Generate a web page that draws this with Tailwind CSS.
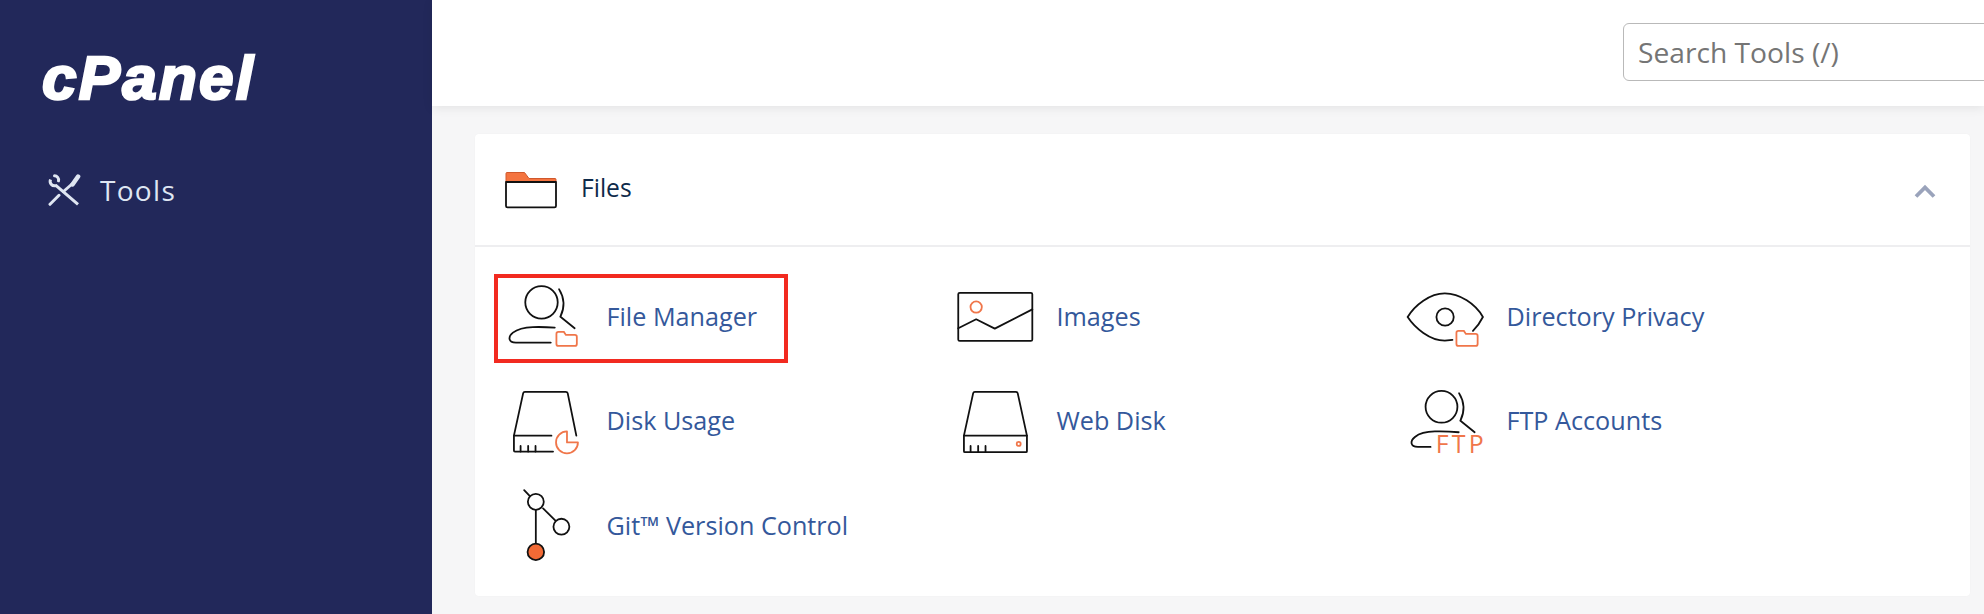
<!doctype html>
<html lang="en">
<head>
<meta charset="utf-8">
<title>cPanel Tools</title>
<script src="https://cdn.jsdelivr.net/npm/@tailwindcss/browser@4"></script>
</head>
<body class="font-['Open_Sans',sans-serif] bg-[#f6f6f7]">
<div class="flex h-[614px] w-[1984px] overflow-hidden">
  <aside class="w-[432px] shrink-0 bg-[#22285a] flex flex-col">
    <div class="pl-[42px] pt-[42px] h-[140px] font-['Liberation_Sans',sans-serif] font-bold italic text-[62px] leading-[72px] tracking-[2.2px] text-white [-webkit-text-stroke:2.5px_white]">cPanel</div>
    <div class="flex items-center h-[40px] mt-[30px] pl-[47px]">
      <svg class="w-[34px] h-[32px]" viewBox="0 0 34 32" fill="none" stroke="#dfe6f2" stroke-width="3" stroke-linecap="round">
        <path d="M3.500 5.500c-1.300 3.400 1.200 7 5.600 6.200L31 30.300" stroke-linecap="butt"/>
        <path d="M7.500 1.800c2.600 0 4.600 2.400 4 5"/>
        <path d="M3 30.300l9-9"/>
        <path d="M16.500 17.500l8.500-7.500"/>
        <path d="M25.500 10.500l5.600-8" stroke-width="4.500"/>
      </svg>
      <span class="ml-[19px] text-[28px] leading-[40px] tracking-[1.300px] text-[#dfe6f2]">Tools</span>
    </div>
  </aside>
  <main class="flex-1 min-w-0 flex flex-col">
    <header class="h-[106px] shrink-0 bg-white shadow-[0_2px_10px_rgba(0,0,0,0.08)] relative pl-[1191px] pt-[23px]">
      <div class="w-[420px] h-[58px] border border-[#b9b9b9] rounded-[6px] pl-[14px] flex items-center text-[28.200px] text-[#757575] whitespace-nowrap">Search Tools (/)</div>
    </header>
    <section class="ml-[43px] mt-[28px] w-[1495px] bg-white rounded-[4px] shadow-[0_0_2px_rgba(0,0,0,0.03)]">
      <div class="h-[113px] border-b-2 border-[#eeeef0] flex items-center pl-[30px] pr-[34px]">
        <svg class="w-[52px] h-[38px]" viewBox="0 0 52 38" fill="none">
          <path d="M1 11V2.500q0-1 1-1h17.500l4.500 6h26q1 0 1 1v2.500z" fill="#f47440" stroke="#d0582c" stroke-width="1"/>
          <path d="M1 11V35q0 1.300 1.500 1.300h47q1.500 0 1.500-1.300V11z" stroke="#111" stroke-width="1.800" stroke-linejoin="round"/>
        </svg>
        <span class="ml-[24px] -mt-[3px] text-[24.600px] text-[#0e2a4a]">Files</span>
        <svg class="ml-auto w-[22px] h-[14px] mt-[3px]" viewBox="0 0 22 14" fill="none"><path d="M2 12.500l9-9 9 9" stroke="#9aa3bb" stroke-width="3.800"/></svg>
      </div>
      <div class="grid grid-cols-[450px_450px_450px] auto-rows-[89px] gap-y-[15px] pl-[19px] pt-[27px] pb-[25px] text-[25.200px] text-[#34589b] whitespace-nowrap">
        <a class="flex items-center w-[294px] border-4 border-[#f22a20]">
          <svg class="w-[108.500px] h-[81px] shrink-0" viewBox="0 0 109 81" fill="none" stroke="#111" stroke-width="1.800" stroke-linecap="round">
            <circle cx="43.700" cy="24.300" r="16.300"/>
            <path d="M61.300 11c5 8 6 18 1.400 27.700L77 50.300"/>
            <path d="M53 64.700H18c-8 0-8-6-3-10 5-4 10-5.300 20-5.600 8-.2 15 0 22 .6"/>
            <path d="M58.700 56q0-2 2-2h5.500l2 3h9q2 0 2 2v7q0 2-2 2h-16.500q-2 0-2-2z" stroke="#f0764a"/>
          </svg>
          <span class="-mt-[4px]">File Manager</span>
        </a>
        <a class="flex items-center w-[294px] border-4 border-transparent">
          <svg class="w-[108.500px] h-[81px] shrink-0" viewBox="0 0 109 81" fill="none" stroke="#111" stroke-width="1.800" stroke-linecap="round" stroke-linejoin="round">
            <rect x="10.300" y="14.700" width="74.400" height="48.300" rx="1.500"/>
            <path d="M10.300 50.300l18-9 18.700 9.400 37.700-19.400"/>
            <circle cx="28.300" cy="29" r="5.700" stroke="#f0764a"/>
          </svg>
          <span class="-mt-[4px]">Images</span>
        </a>
        <a class="flex items-center w-[294px] border-4 border-transparent">
          <svg class="w-[108.500px] h-[81px] shrink-0" viewBox="0 0 109 81" fill="none" stroke="#111" stroke-width="1.800" stroke-linecap="round">
            <path d="M75.300 53c4-4 7.500-9 10-14C78 26 62 15.300 47 15.300 32 15.300 17 27 9.700 39 17 50 32 62.700 47 62.700l7.700-.7"/>
            <circle cx="47.300" cy="39" r="8.700"/>
            <path d="M58.700 55q0-2 2-2h5.500l2 3h9.800q2 0 2 2v8q0 2-2 2h-17.300q-2 0-2-2z" stroke="#f0764a"/>
          </svg>
          <span class="-mt-[4px]">Directory Privacy</span>
        </a>
        <a class="flex items-center w-[294px] border-4 border-transparent">
          <svg class="w-[108.500px] h-[81px] shrink-0" viewBox="0 0 109 81" fill="none" stroke="#111" stroke-width="1.800" stroke-linecap="round" stroke-linejoin="round">
            <path d="M53.700 53.700H16L25.300 11q.3-1.300 1.700-1.300h41q1.700 0 2 1.300l8.700 42.700"/>
            <path d="M16 53.700v15q0 1 1 1h38.300"/>
            <path d="M22.700 64v5.700M30.300 64v5.700M37.700 64v5.700"/>
            <path d="M69.300 49.500a11 11 0 1 0 11 11h-11z" stroke="#f0764a"/>
          </svg>
          <span class="-mt-[4px]">Disk Usage</span>
        </a>
        <a class="flex items-center w-[294px] border-4 border-transparent">
          <svg class="w-[108.500px] h-[81px] shrink-0" viewBox="0 0 109 81" fill="none" stroke="#111" stroke-width="1.800" stroke-linecap="round" stroke-linejoin="round">
            <path d="M16 53.700L25.300 11q.3-1.300 1.700-1.300h41q1.700 0 2 1.300l9.300 42.700z"/>
            <path d="M16 53.700v15.600q0 1 1 1h61.300q1 0 1-1V53.700"/>
            <path d="M22.700 64v6M30.300 64v6M37.700 64v6"/>
            <circle cx="71" cy="62" r="2" stroke="#f0764a"/>
          </svg>
          <span class="-mt-[4px]">Web Disk</span>
        </a>
        <a class="flex items-center w-[294px] border-4 border-transparent">
          <svg class="w-[108.500px] h-[81px] shrink-0" viewBox="0 0 109 81" fill="none" stroke="#111" stroke-width="1.800" stroke-linecap="round">
            <circle cx="43.700" cy="24.700" r="16"/>
            <path d="M61.300 11c5 8 6 18 1.400 27.700L77 50.300"/>
            <path d="M32.700 65H20c-8 0-8-6-3-10 5-4 10-5.300 20-5.500 8-.2 15 0 24 .8"/>
            <text x="38" y="71.500" font-size="25" letter-spacing="3.200" fill="#f0764a" stroke="none">FTP</text>
          </svg>
          <span class="-mt-[4px]">FTP Accounts</span>
        </a>
        <a class="flex items-center w-[294px] border-4 border-transparent">
          <svg class="w-[108.500px] h-[81px] shrink-0" viewBox="0 0 109 81" fill="none" stroke="#111" stroke-width="1.800" stroke-linecap="round">
            <path d="M26.300 4l5.700 6M45.300 22.300l12.400 12.400M38 24v33"/>
            <circle cx="38" cy="15.700" r="8"/>
            <circle cx="63.700" cy="40.700" r="8"/>
            <circle cx="38" cy="66" r="8.300" fill="#f26a35"/>
          </svg>
          <span class="-mt-[2px]">Git™ Version Control</span>
        </a>
      </div>
    </section>
  </main>
</div>
</body>
</html>
